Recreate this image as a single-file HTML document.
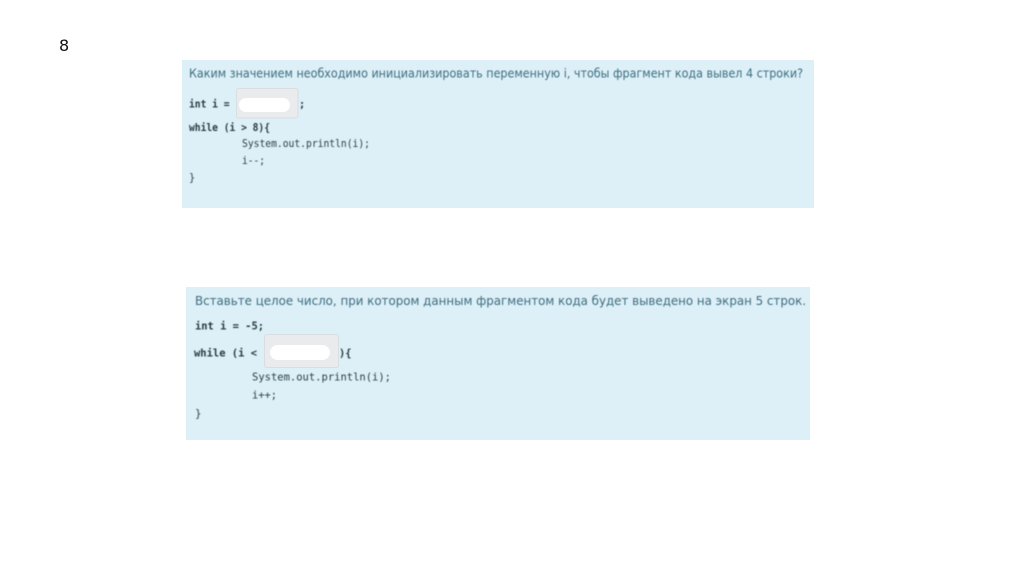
<!DOCTYPE html>
<html lang="ru">
<head>
<meta charset="utf-8">
<title>8</title>
<style>
html,body{margin:0;padding:0;width:1024px;height:574px;overflow:hidden;background:#fff}
svg{display:block;position:absolute;left:0;top:0}
.h{font-family:"DejaVu Sans","Liberation Sans",sans-serif;fill:#3d6c80}
.c{font-family:"DejaVu Sans Mono","Liberation Mono",monospace;fill:#2a3f48}
.b{font-weight:bold;fill:#263a43}
.blur{filter:blur(.4px)}
</style>
</head>
<body>
<svg width="1024" height="574" viewBox="0 0 1024 574" xmlns="http://www.w3.org/2000/svg">
  <text x="59" y="51" font-family="DejaVu Sans, sans-serif" font-size="16" fill="#111">8</text>

  <rect x="182" y="60" width="632" height="148" fill="#ddf0f7"/>
  <rect x="236.500" y="88.500" width="61.500" height="29.500" rx="2" fill="#e9ebed" stroke="#d9dee1"/>
  <rect x="239" y="98" width="51" height="14" rx="7" fill="#fff"/>
  <g class="blur">
    <text class="h" x="189" y="77.500" font-size="12.300" textLength="614" lengthAdjust="spacingAndGlyphs">Каким значением необходимо инициализировать переменную i, чтобы фрагмент кода вывел 4 строки?</text>
    <g font-size="10.200">
      <text class="c b" x="189" y="107.500" textLength="40.500" lengthAdjust="spacingAndGlyphs">int i =</text>
      <text class="c b" x="299" y="107.500">;</text>
      <text class="c b" x="189" y="131" textLength="81" lengthAdjust="spacingAndGlyphs">while (i &gt; 8){</text>
      <text class="c" x="242" y="147" textLength="128" lengthAdjust="spacingAndGlyphs">System.out.println(i);</text>
      <text class="c" x="242" y="164" textLength="23" lengthAdjust="spacingAndGlyphs">i--;</text>
      <text class="c" x="189" y="181">}</text>
    </g>
  </g>

  <rect x="186" y="287" width="624" height="153" fill="#ddf0f7"/>
  <rect x="264.500" y="334.500" width="74" height="33" rx="2" fill="#e9ebed" stroke="#d9dee1"/>
  <rect x="270" y="345" width="60" height="15" rx="7.500" fill="#fff"/>
  <g class="blur">
    <text class="h" x="195" y="305" font-size="12.800" textLength="611" lengthAdjust="spacingAndGlyphs">Вставьте целое число, при котором данным фрагментом кода будет выведено на экран 5 строк.</text>
    <g font-size="10.800">
      <text class="c b" x="195" y="329.500" textLength="69" lengthAdjust="spacingAndGlyphs">int i = -5;</text>
      <text class="c b" x="194" y="356.500" textLength="63" lengthAdjust="spacingAndGlyphs">while (i &lt;</text>
      <text class="c b" x="339" y="356.500" textLength="12.500" lengthAdjust="spacingAndGlyphs">){</text>
      <text class="c" x="252" y="380.500" textLength="139" lengthAdjust="spacingAndGlyphs">System.out.println(i);</text>
      <text class="c" x="252" y="398.500" textLength="25" lengthAdjust="spacingAndGlyphs">i++;</text>
      <text class="c" x="195" y="417">}</text>
    </g>
  </g>
</svg>
</body>
</html>
